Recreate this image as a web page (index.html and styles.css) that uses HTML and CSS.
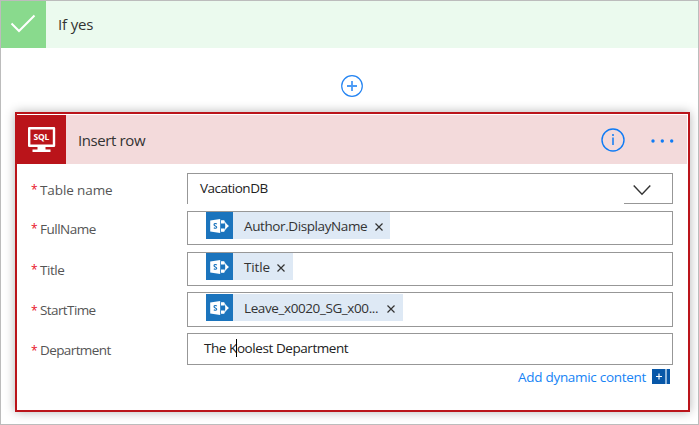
FILE: index.html
```html
<!DOCTYPE html>
<html lang="en">
<head>
<meta charset="utf-8">
<title>If yes</title>
<link rel="stylesheet" href="styles.css">
</head>
<body>
<svg width="0" height="0" class="defs">
  <symbol id="sp" viewBox="0 0 27 27">
    <path d="M15.500 9.500h2.500l3.500 4.500-3.500 4.500h-2.500" fill="none" stroke="#cfe4f4" stroke-width="1.300"/>
    <path d="M15 8.300h3.300v3.200h-3.300zM19.200 11l3.800 3-3.800 3zM15 16.500h3.300v3.200h-3.300z" fill="#fff"/>
    <path d="M4.200 8.500L14.200 7v14L4.200 19.500z" fill="#fff"/>
    <path d="M10.900 12C9.600 11.100 8 11.600 8 12.700c0 1.400 2.700 1.100 2.700 2.500 0 1.200-1.600 1.400-2.900.6" fill="none" stroke="#1b74bd" stroke-width="1.100"/>
  </symbol>
</svg>
<main class="scope">
  <header class="branch">
    <div class="branch-icon"><svg width="45" height="47" viewBox="0 0 45 47"><path d="M10.500 22.500l7.500 7.500L33.500 14.500" fill="none" stroke="#fff" stroke-width="2"/></svg></div>
    <h1 class="branch-title">If yes</h1>
  </header>
  <div class="add"><svg width="22" height="22" viewBox="0 0 22 22"><circle cx="11" cy="11" r="10.300" fill="none" stroke="#2484f2" stroke-width="1.200"/><path d="M6 11h10M11 6v10" stroke="#4a9af5" stroke-width="1.800"/></svg></div>
  <section class="card">
    <header class="card-head">
      <div class="card-icon"><svg width="49" height="49" viewBox="0 0 49 49"><path d="M12.200 13.200h24.800v17.600H12.200z" fill="none" stroke="#fff" stroke-width="2.400" stroke-linejoin="round"/><path d="M20.500 31h8v3.500h5V37H15.500v-2.500h5z" fill="#fff"/><text x="24.300" y="25" class="sql">SQL</text></svg></div>
      <h2 class="card-title">Insert row</h2>
      <svg class="info" width="24" height="24" viewBox="0 0 24 24"><circle cx="12" cy="12" r="11" fill="none" stroke="#0f7bf5" stroke-width="1.400"/><path d="M12 9.500V17M12 6v2" stroke="#0f7bf5" stroke-width="1.500"/></svg>
      <svg class="more" width="24" height="4" viewBox="0 0 24 4"><g fill="#0f7bf5"><circle cx="2" cy="2" r="1.700"/><circle cx="11.300" cy="2" r="1.700"/><circle cx="20.700" cy="2" r="1.700"/></g></svg>
    </header>
    <div class="form">
      <div class="row r1"><label class="label"><b>*</b><span class="l1">Table name</span></label><div class="field select"><span class="value v1">VacationDB</span><span class="drop"><svg width="18" height="11" viewBox="0 0 18 11"><path d="M.7 .5l8.300 8.800L17.300 .5" fill="none" stroke="#333" stroke-width="1.400"/></svg></span></div></div>
      <div class="row r2"><label class="label"><b>*</b><span class="l2">FullName</span></label><div class="field"><span class="chip c2"><svg width="27" height="27"><use href="#sp"/></svg><span class="t2">Author.DisplayName</span><svg class="x" width="8" height="8" viewBox="0 0 8 8"><path d="M.5 .5l7 7M7.500 .5l-7 7"/></svg></span></div></div>
      <div class="row r3"><label class="label"><b>*</b><span class="l3">Title</span></label><div class="field"><span class="chip c3"><svg width="27" height="27"><use href="#sp"/></svg><span class="t3">Title</span><svg class="x" width="8" height="8" viewBox="0 0 8 8"><path d="M.5 .5l7 7M7.500 .5l-7 7"/></svg></span></div></div>
      <div class="row r4"><label class="label"><b>*</b><span class="l4">StartTime</span></label><div class="field"><span class="chip c4"><svg width="27" height="27"><use href="#sp"/></svg><span class="t4">Leave_x0020_SG_x00...</span><svg class="x" width="8" height="8" viewBox="0 0 8 8"><path d="M.5 .5l7 7M7.500 .5l-7 7"/></svg></span></div></div>
      <div class="row r5"><label class="label"><b>*</b><span class="l5">Department</span></label><div class="field"><span class="value v5">The K<i class="caret"></i>oolest Department</span></div></div>
      <div class="dynamic"><span class="link">Add dynamic content</span><svg width="18" height="15" viewBox="0 0 18 15"><path d="M0 0h18v15H0z" fill="#0757a8"/><path d="M13 0h2v15h-2z" fill="#8db5dc"/><path d="M4 7.500h6M7 4.500v6" stroke="#fff" stroke-width="1.200"/></svg></div>
    </div>
  </section>
</main>
</body>
</html>
```
FILE: styles.css
```css
* { box-sizing: border-box; }
body { margin: 0; background: #fff; font-family: "Open Sans", "Noto Sans", sans-serif; font-size: 13.5px; color: #333; }
svg { display: block; flex: none; }
.defs { position: absolute; }
.scope { width: 699px; height: 425px; border: 1px solid #bcbcbc; overflow: hidden; }
.branch { display: flex; height: 47px; background: #ebfaee; }
.branch-icon { width: 45px; background: #89da8d; }
.branch-title, .card-title { margin: 0; font-size: 15px; font-weight: 400; white-space: nowrap; }
.branch-title { padding-left: 12px; line-height: 46px; letter-spacing: -.15px; }
.add { padding: 27px 0 0 340px; height: 64px; }
.card { width: 675px; height: 300px; margin-left: 14px; border: 2px solid #ba141a; padding: 1px 1px 0 0; background: #fff; box-shadow: 0 0 10px rgba(0,0,0,.3); }
.card-head { display: flex; align-items: center; height: 49px; background: #f3dadb; }
.card-icon { width: 49px; height: 49px; background: #ba141a; }
.sql { font: 700 8.5px "Open Sans", sans-serif; fill: #fff; text-anchor: middle; letter-spacing: -.3px; }
.card-title { padding: 2px 0 0 12px; line-height: 49px; flex: 1; letter-spacing: -.4px; }
.info { margin-right: 26px; }
.more { margin-right: 12px; margin-top: 2px; }
.form { padding: 9px 14px 0 14px; }
.row { display: flex; }
.label { width: 156px; display: flex; align-items: center; gap: 4px; color: #555; white-space: nowrap; }
.label b { font-weight: 400; font-size: 12px; color: #e81123; width: 5px; }
.label .l1 { letter-spacing: -.1px; }
.label .l2 { letter-spacing: -.5px; }
.label .l3 { letter-spacing: -.45px; }
.label .l4, .label .l5 { letter-spacing: -.6px; }
.field { width: 486px; border: 1px solid #979797; display: flex; align-items: flex-start; white-space: nowrap; }
.r1 { height: 31px; margin-bottom: 7px; }
.r1 .label { padding-top: 2px; }
.r2 { height: 34px; margin-bottom: 7px; }
.r2 .label, .r3 .label { padding-top: 1px; }
.r3 { height: 34px; margin-bottom: 6px; }
.r4 { height: 35px; margin-bottom: 6px; }
.r4 .label { padding-top: 1px; }
.r5 { height: 32px; margin-bottom: 4px; }
.r5 .label { padding-top: 2px; }
.select { border-bottom: 0; justify-content: space-between; }
.drop { width: 48px; height: 30px; border-bottom: 1px solid #979797; padding: 11px 0 0 9px; }
.value { line-height: 30px; color: #222; }
.v1 { padding-left: 12px; line-height: 28px; letter-spacing: -.5px; }
.v5 { padding-left: 16px; line-height: 29px; letter-spacing: -.43px; }
.caret { display: inline-block; width: 1px; height: 18px; margin: 0 0 0 -1px; background: #000; vertical-align: -4px; }
.chip { display: flex; align-items: center; height: 27px; margin-left: 18px; background: #dee9f5; color: #333; padding-right: 7px; }
.chip > svg:first-child { background: #1b74bd; }
.chip span { padding: 2px 0 0 11px; flex: 1; line-height: 27px; }
.chip .t2, .chip .t4 { letter-spacing: -.4px; }
.chip .t3 { letter-spacing: -.15px; }
.c2 { width: 184px; }
.c3 { width: 87px; padding-right: 8px; }
.c4 { width: 197px; margin-top: 1px; }
.x { margin-top: 3px; fill: none; stroke: #333; stroke-width: 1.2; }
.c4 .x { margin-right: 1px; }
.dynamic { display: flex; justify-content: flex-end; align-items: flex-start; gap: 6px; margin-right: 3px; color: #1683f5; }
.link { line-height: 17px; letter-spacing: -.3px; white-space: nowrap; }
```
